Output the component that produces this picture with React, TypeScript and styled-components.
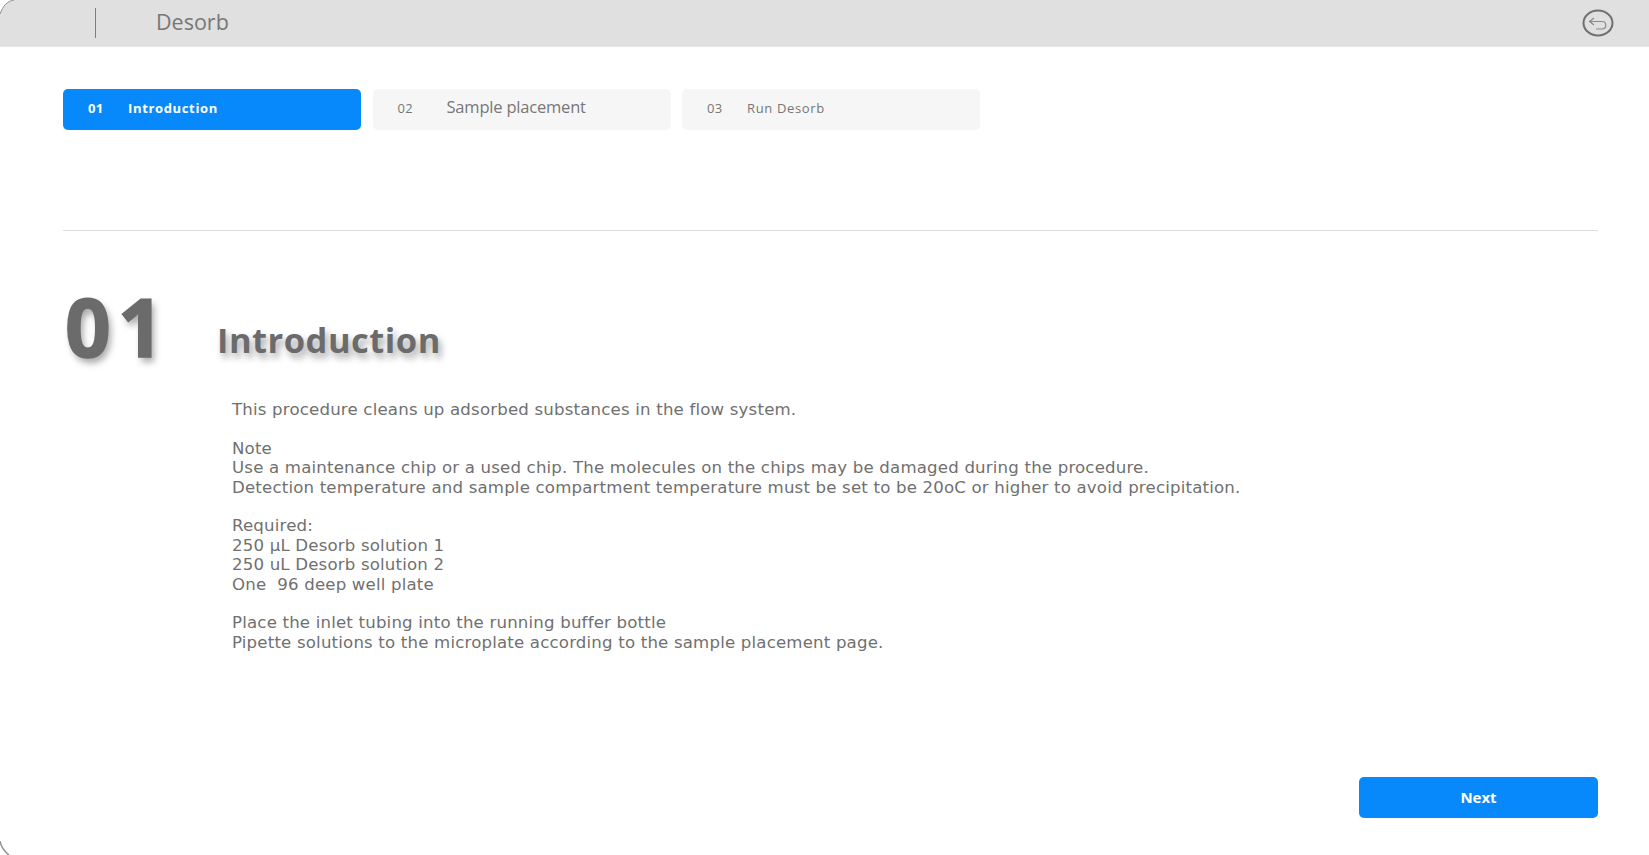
import styled, { createGlobalStyle } from "styled-components";

const steps = [
    { id: "01", name: "Introduction" },
    { id: "02", name: "Sample placement" },
    { id: "03", name: "Run Desorb" },
];

const GlobalStyle = createGlobalStyle`
    html, body {
        margin: 0;
        padding: 0;
        background: #fff;
    }
    body {
        font-family: "Open Sans", "Liberation Sans", sans-serif;
        color: #6b6b6b;
    }
`;

function App() {
    return (
        <Page>
            <GlobalStyle />
            <CornerTop viewBox="0 0 14 14">
                <path d="M0 14 L0 0 L14 0 C7 1 3 6 0 14 Z" fill="#fff" />
                <path d="M14 0 C7 1 3 6 0 14" fill="none" stroke="#8f8f8f" />
            </CornerTop>
            <CornerBottom viewBox="0 0 10 14">
                <path d="M0 0 C1 6 4 10 9 14" fill="none" stroke="#8f8f8f" strokeWidth="1.4" />
            </CornerBottom>
            <Header>
                <HeaderDivider />
                <HeaderTitle>Desorb</HeaderTitle>
                <BackIcon viewBox="0 0 32 28">
                    <ellipse cx="16" cy="14" rx="14.5" ry="12.5" fill="none" stroke="#6f6f6f" strokeWidth="2" />
                    <path d="M12 9 L7.5 12.5 L12 16 M7.5 12.5 H20 C25 12.5 25 20 20 20 H14" fill="none" stroke="#8a8a8a" strokeWidth="1.2" />
                </BackIcon>
            </Header>
            <Content>
                <StepList>
                    {steps.map((item, index) => (
                        <Step key={item.id} $active={index === 0}>
                            <StepNumber $active={index === 0}>{item.id}</StepNumber>
                            <StepName $active={index === 0} $large={index === 1}>{item.name}</StepName>
                        </Step>
                    ))}
                </StepList>
                <Divider />
                <Heading>
                    <HeadingNumber>01</HeadingNumber>
                    <HeadingTitle>Introduction</HeadingTitle>
                </Heading>
                <Body>
                    <p>This procedure cleans up adsorbed substances in the flow system.</p>
                    <p>
                        Note<br />
                        Use a maintenance chip or a used chip. The molecules on the chips may be damaged during the procedure.<br />
                        Detection temperature and sample compartment temperature must be set to be 20oC or higher to avoid precipitation.
                    </p>
                    <p>
                        Required:<br />
                        250 µL Desorb solution 1<br />
                        250 uL Desorb solution 2<br />
                        One&nbsp; 96 deep well plate
                    </p>
                    <p>
                        Place the inlet tubing into the running buffer bottle<br />
                        Pipette solutions to the microplate according to the sample placement page.
                    </p>
                </Body>
                <Footer>
                    <NextButton>Next</NextButton>
                </Footer>
            </Content>
        </Page>
    );
}

const Page = styled.div`
    position: relative;
    width: 1649px;
    height: 855px;
    overflow: hidden;
    background: #fff;
`;

const CornerTop = styled.svg`
    position: absolute;
    top: 0;
    left: 0;
    width: 14px;
    height: 14px;
`;

const CornerBottom = styled.svg`
    position: absolute;
    left: 0;
    bottom: 0;
    width: 10px;
    height: 14px;
`;

const Header = styled.header`
    display: flex;
    align-items: center;
    height: 46px;
    padding: 0 35px 0 95px;
    background: #e0e0e0;
    border-bottom: 1px solid #e8e8e8;
`;

const HeaderDivider = styled.span`
    width: 1px;
    height: 30px;
    background: #7d7d7d;
`;

const HeaderTitle = styled.h1`
    flex: 1;
    margin: -3px 0 0 60px;
    font-size: 21.5px;
    font-weight: 400;
    color: #777;
`;

const BackIcon = styled.svg`
    width: 32px;
    height: 28px;
    margin-top: -1px;
`;

const Content = styled.main`
    padding: 42px 51px 0 63px;
`;

const StepList = styled.div`
    display: flex;
    gap: 11.5px;
`;

const Step = styled.div<{ $active: boolean }>`
    display: flex;
    align-items: center;
    box-sizing: border-box;
    width: 298px;
    height: 41px;
    padding: 0 0 3px 25px;
    border-radius: 5px;
    background: ${({ $active }) => ($active ? "#0889fb" : "#f6f6f6")};
    color: ${({ $active }) => ($active ? "#fff" : "#777")};
`;

const StepNumber = styled.span<{ $active: boolean }>`
    width: 40px;
    font-size: 13px;
    font-weight: ${({ $active }) => ($active ? 700 : 400)};
    letter-spacing: 0.4px;
`;

const StepName = styled.span<{ $active: boolean; $large: boolean }>`
    margin-left: ${({ $large }) => ($large ? "9px" : "0")};
    margin-top: ${({ $large }) => ($large ? "-3px" : "0")};
    font-size: ${({ $large }) => ($large ? "16.5px" : "13px")};
    font-weight: ${({ $active }) => ($active ? 700 : 400)};
    letter-spacing: ${({ $large }) => ($large ? "-0.2px" : "0.65px")};
`;

const Divider = styled.hr`
    height: 1px;
    margin: 100px 0 0;
    border: 0;
    background: #dedede;
`;

const Heading = styled.div`
    display: flex;
    align-items: flex-start;
    margin-top: 45px;
    text-shadow: 3px 5px 7px rgba(0, 0, 0, 0.35);
    color: #6b6b6b;
    font-weight: 700;
`;

const HeadingNumber = styled.span`
    width: 152px;
    padding-left: 2px;
    font-size: 80px;
    line-height: 100px;
    letter-spacing: 7px;
    -webkit-text-stroke: 1.5px #6b6b6b;
`;

const HeadingTitle = styled.span`
    margin-top: 41px;
    font-size: 34.5px;
    line-height: 45px;
    letter-spacing: 0.5px;
`;

const Body = styled.div`
    margin: 24px 0 0 169px;
    font-family: "DejaVu Sans", "Open Sans", sans-serif;
    font-size: 16.6px;
    line-height: 19.4px;
    letter-spacing: 0.18px;
    color: #707070;

    p {
        margin: 0 0 19.4px;
    }
`;

const Footer = styled.div`
    display: flex;
    justify-content: flex-end;
    margin-top: 125px;
`;

const NextButton = styled.button`
    width: 239px;
    height: 41px;
    padding: 0 0 2px;
    border: 0;
    border-radius: 5px;
    background: #0889fb;
    color: #fff;
    font-family: inherit;
    font-size: 15px;
    font-weight: 700;
`;

export default App;
